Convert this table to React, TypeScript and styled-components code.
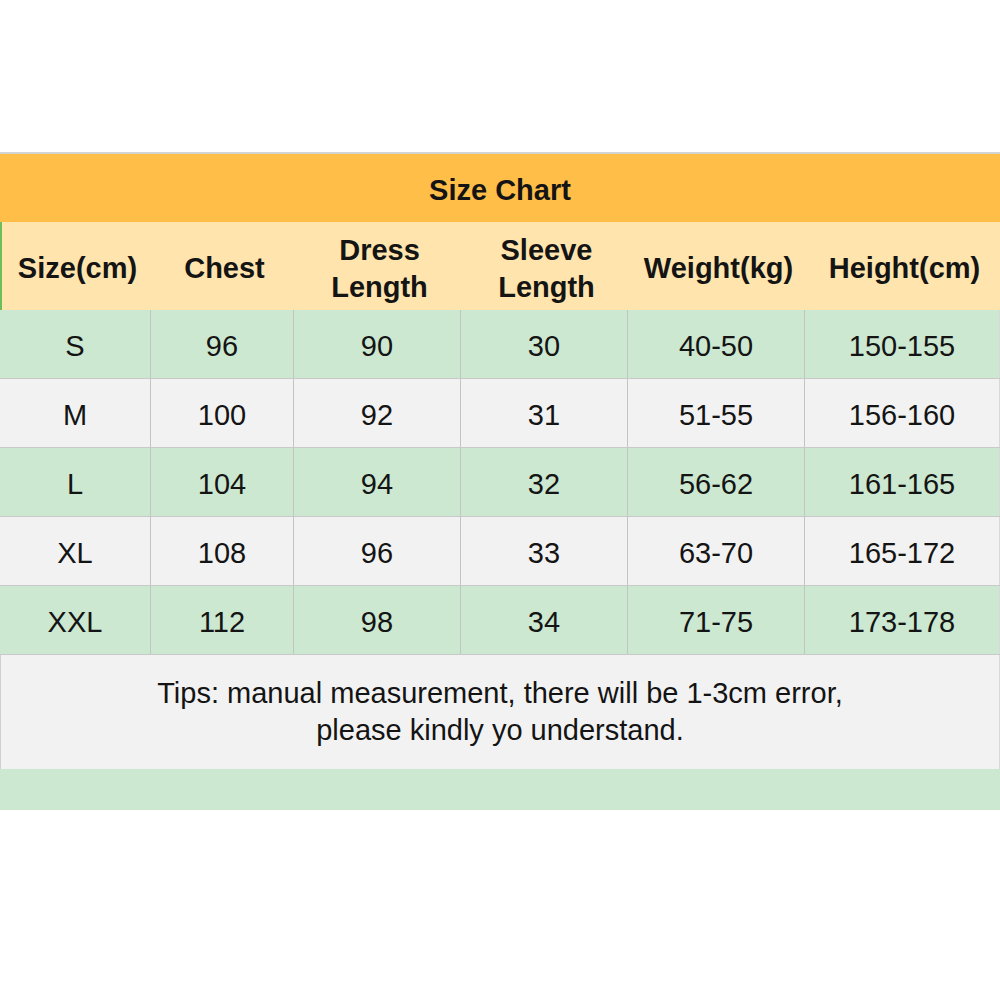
import React from "react";
import styled, { createGlobalStyle } from "styled-components";

const GlobalStyle = createGlobalStyle`
    html, body {
        margin: 0;
        padding: 0;
        background: #ffffff;
    }
    body {
        font-family: "Liberation Sans", Arial, sans-serif;
        color: #141414;
    }
`;

const columns = "151px 143px 167px 167px 177px 195px";

const rows = [
    { size: "S", chest: "96", dress: "90", sleeve: "30", weight: "40-50", height: "150-155" },
    { size: "M", chest: "100", dress: "92", sleeve: "31", weight: "51-55", height: "156-160" },
    { size: "L", chest: "104", dress: "94", sleeve: "32", weight: "56-62", height: "161-165" },
    { size: "XL", chest: "108", dress: "96", sleeve: "33", weight: "63-70", height: "165-172" },
    { size: "XXL", chest: "112", dress: "98", sleeve: "34", weight: "71-75", height: "173-178" },
];

const App = () => {
    return (
        <>
            <GlobalStyle />
            <Page>
                <Chart>
                    <TitleRow>Size Chart</TitleRow>
                    <HeaderRow>
                        <HeadCell>Size(cm)</HeadCell>
                        <HeadCell>Chest</HeadCell>
                        <HeadCell>Dress<br />Length</HeadCell>
                        <HeadCell>Sleeve<br />Length</HeadCell>
                        <HeadCell>Weight(kg)</HeadCell>
                        <HeadCell>Height(cm)</HeadCell>
                    </HeaderRow>
                    {rows.map((r, i) => (
                        <DataRow key={r.size} $green={i % 2 === 0}>
                            <Cell>{r.size}</Cell>
                            <Cell>{r.chest}</Cell>
                            <Cell>{r.dress}</Cell>
                            <Cell>{r.sleeve}</Cell>
                            <Cell>{r.weight}</Cell>
                            <Cell>{r.height}</Cell>
                        </DataRow>
                    ))}
                    <TipsRow>
                        Tips: manual measurement, there will be 1-3cm error,<br />
                        please kindly yo understand.
                    </TipsRow>
                    <FooterRow />
                </Chart>
            </Page>
        </>
    );
};

export default App;

const Page = styled.div`
    width: 1000px;
    height: 1000px;
    padding-top: 152px;
    box-sizing: border-box;
`

const Chart = styled.div`
    width: 1000px;
    display: flex;
    flex-direction: column;
    border-top: 2px solid #d4d4d4;
    box-sizing: border-box;
`

const TitleRow = styled.div`
    height: 68px;
    background: #febe48;
    display: flex;
    align-items: center;
    justify-content: center;
    font-size: 29px;
    font-weight: 700;
    padding-top: 4px;
    box-sizing: border-box;
`

const HeaderRow = styled.div`
    display: grid;
    grid-template-columns: ${columns};
    height: 88px;
    background: #ffe5ad;
    border-left: 2px solid #6bbf59;
    box-sizing: border-box;
`

const HeadCell = styled.div`
    display: flex;
    align-items: center;
    justify-content: center;
    text-align: center;
    font-size: 29px;
    font-weight: 700;
    line-height: 37px;
    padding-top: 5px;
`

const DataRow = styled.div<{ $green: boolean }>`
    display: grid;
    grid-template-columns: ${columns};
    height: 69px;
    background: ${({ $green }) => ($green ? "#cce8d1" : "#f2f2f2")};
    border-bottom: 1px solid #c9c9c9;
    box-sizing: border-box;
`

const Cell = styled.div`
    display: flex;
    align-items: center;
    justify-content: center;
    font-size: 29px;
    border-right: 1px solid #c4c4c4;
    padding-top: 5px;
    &:last-child {
        border-right: 1px solid #d8d8d8;
    }
`

const TipsRow = styled.div`
    height: 114px;
    background: #f2f2f2;
    display: flex;
    flex-direction: column;
    align-items: center;
    justify-content: center;
    text-align: center;
    font-size: 29px;
    line-height: 37px;
    border-left: 1px solid #d0d0d0;
    border-right: 1px solid #d8d8d8;
    box-sizing: border-box;
`

const FooterRow = styled.div`
    height: 41px;
    background: #cce8d1;
`
